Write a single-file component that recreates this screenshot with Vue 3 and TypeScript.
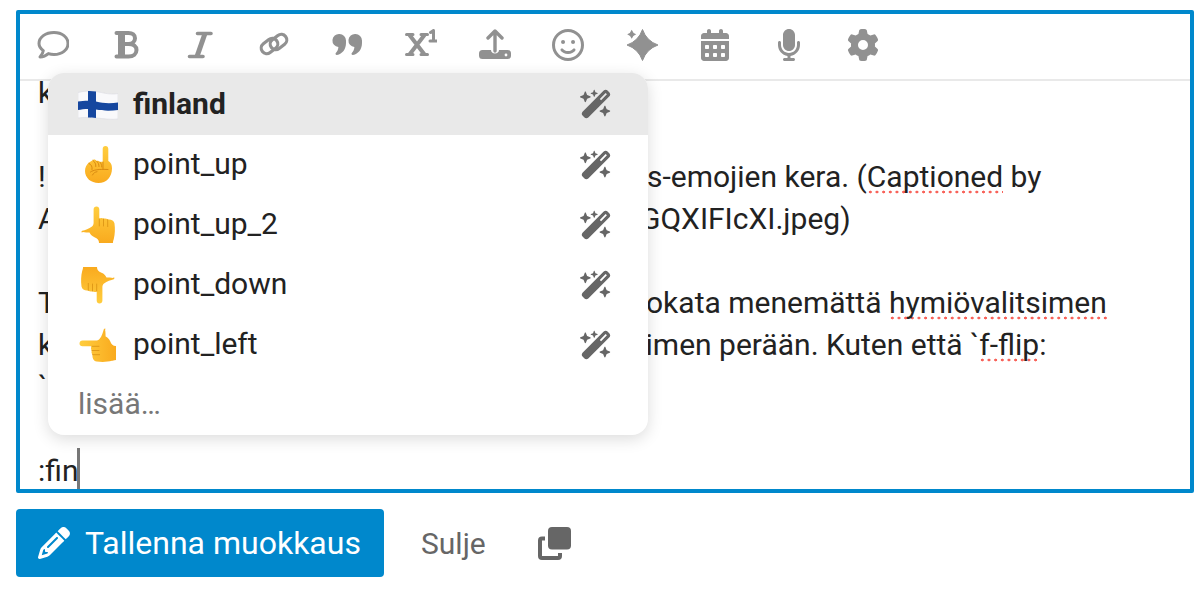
<script setup lang="ts">
interface Seg { t: string; spell?: boolean }
interface Line { lead: string; x?: number; segs?: Seg[] }

const lines: Line[] = [
  { lead: 'k' },
  { lead: '' },
  { lead: '!', x: 609, segs: [{ t: 's-emojien kera. (' }, { t: 'Captioned', spell: true }, { t: ' by' }] },
  { lead: 'A', x: 602, segs: [{ t: 'GQXIFIcXI.jpeg)' }] },
  { lead: '' },
  { lead: 'T', x: 608, segs: [{ t: 'okata menemättä ' }, { t: 'hymiövalitsimen', spell: true }] },
  { lead: 'k', x: 591, segs: [{ t: 'nimen perään. Kuten että `' }, { t: 'f-flip', spell: true }, { t: ':' }] },
  { lead: '`' },
  { lead: '' },
]

const icons = [
  { id: 'comment', vb: '0 0 32 32' },
  { id: 'bold', vb: '0 0 32 32' },
  { id: 'italic', vb: '0 0 32 32' },
  { id: 'link', vb: '0 0 32 32' },
  { id: 'quote', vb: '0 0 32 32' },
  { id: 'sup', vb: '0 0 32 32' },
  { id: 'upload', vb: '0 0 32 32' },
  { id: 'smile', vb: '0 0 512 512' },
  { id: 'spark', vb: '0 0 32 32' },
  { id: 'cal', vb: '0 0 448 512' },
  { id: 'mic', vb: '0 0 384 512' },
  { id: 'gear', vb: '0 0 512 512' },
]

const paths: Record<string, string> = {
  smile: 'M464 256A208 208 0 1 0 48 256a208 208 0 1 0 416 0zM0 256a256 256 0 1 1 512 0A256 256 0 1 1 0 256zm177.6 62.1C192.8 334.5 218.8 352 256 352s63.2-17.5 78.4-33.9c9-9.7 24.2-10.4 33.9-1.4s10.4 24.2 1.4 33.9c-22 23.8-60 49.4-113.6 49.4s-91.7-25.5-113.6-49.4c-9-9.7-8.4-24.9 1.4-33.9s24.9-8.4 33.9 1.4zM144.4 208a32 32 0 1 1 64 0 32 32 0 1 1 -64 0zm192-32a32 32 0 1 1 0 64 32 32 0 1 1 0-64z',
  cal: 'M128 0c17.7 0 32 14.3 32 32V64H288V32c0-17.7 14.3-32 32-32s32 14.3 32 32V64h48c26.5 0 48 21.5 48 48v48H0V112C0 85.5 21.5 64 48 64H96V32c0-17.7 14.3-32 32-32zM0 192H448V464c0 26.5-21.5 48-48 48H48c-26.5 0-48-21.5-48-48V192zm64 80v32c0 8.8 7.2 16 16 16h32c8.8 0 16-7.2 16-16V272c0-8.8-7.2-16-16-16H80c-8.8 0-16 7.2-16 16zm128 0v32c0 8.8 7.2 16 16 16h32c8.8 0 16-7.2 16-16V272c0-8.8-7.2-16-16-16H208c-8.8 0-16 7.2-16 16zm144-16c-8.8 0-16 7.2-16 16v32c0 8.8 7.2 16 16 16h32c8.8 0 16-7.2 16-16V272c0-8.8-7.2-16-16-16H336zM64 400v32c0 8.8 7.2 16 16 16h32c8.8 0 16-7.2 16-16V400c0-8.8-7.2-16-16-16H80c-8.8 0-16 7.2-16 16zm144-16c-8.8 0-16 7.2-16 16v32c0 8.8 7.2 16 16 16h32c8.8 0 16-7.2 16-16V400c0-8.8-7.2-16-16-16H208zm112 16v32c0 8.8 7.2 16 16 16h32c8.8 0 16-7.2 16-16V400c0-8.8-7.2-16-16-16H336c-8.8 0-16 7.2-16 16z',
  mic: 'M192 0C139 0 96 43 96 96V256c0 53 43 96 96 96s96-43 96-96V96c0-53-43-96-96-96zM64 216c0-13.3-10.7-24-24-24s-24 10.7-24 24v40c0 89.1 66.2 162.7 152 174.4V464H120c-13.3 0-24 10.7-24 24s10.7 24 24 24h72 72c13.3 0 24-10.7 24-24s-10.7-24-24-24H216V430.4c85.8-11.7 152-85.3 152-174.4V216c0-13.3-10.7-24-24-24s-24 10.7-24 24v40c0 70.7-57.3 128-128 128s-128-57.3-128-128V216z',
  gear: 'M495.9 166.6c3.2 8.7 .5 18.4-6.4 24.6l-43.3 39.4c1.1 8.3 1.7 16.8 1.7 25.4s-.6 17.1-1.7 25.4l43.3 39.4c6.9 6.2 9.6 15.9 6.4 24.6c-4.4 11.9-9.7 23.3-15.8 34.3l-4.7 8.1c-6.6 11-14 21.4-22.1 31.2c-5.9 7.2-15.7 9.6-24.5 6.8l-55.7-17.7c-13.4 10.3-28.2 18.9-44 25.4l-12.5 57.1c-2 9.1-9 16.3-18.2 17.8c-13.8 2.3-28 3.5-42.5 3.5s-28.7-1.2-42.5-3.5c-9.2-1.5-16.2-8.7-18.2-17.8l-12.5-57.1c-15.8-6.5-30.6-15.1-44-25.4L83.1 425.9c-8.8 2.8-18.6 .3-24.5-6.8c-8.1-9.8-15.5-20.2-22.1-31.2l-4.7-8.1c-6.1-11-11.4-22.4-15.8-34.3c-3.2-8.7-.5-18.4 6.4-24.6l43.3-39.4C64.6 273.1 64 264.6 64 256s.6-17.1 1.7-25.4L22.4 191.2c-6.9-6.2-9.6-15.9-6.4-24.6c4.4-11.9 9.7-23.3 15.8-34.3l4.7-8.1c6.6-11 14-21.4 22.1-31.2c5.9-7.2 15.7-9.6 24.5-6.8l55.7 17.7c13.4-10.3 28.2-18.9 44-25.4l12.5-57.1c2-9.1 9-16.3 18.2-17.8C227.3 1.2 241.5 0 256 0s28.7 1.2 42.5 3.5c9.2 1.5 16.2 8.7 18.2 17.8l12.5 57.1c15.8 6.5 30.6 15.1 44 25.4l55.7-17.7c8.8-2.8 18.6-.3 24.5 6.8c8.1 9.8 15.5 20.2 22.1 31.2l4.7 8.1c6.1 11 11.4 22.4 15.8 34.3zM256 336a80 80 0 1 0 0-160 80 80 0 1 0 0 160z',
  wand: 'M234.7 42.7L197 56.8c-3 1.1-5 4-5 7.2s2 6.1 5 7.2l37.7 14.1L248.8 123c1.1 3 4 5 7.2 5s6.1-2 7.2-5l14.1-37.7L315 71.2c3-1.1 5-4 5-7.2s-2-6.1-5-7.2L277.3 42.7 263.2 5c-1.1-3-4-5-7.2-5s-6.1 2-7.2 5L234.7 42.7zM46.1 395.4c-18.7 18.7-18.7 49.1 0 67.9l34.6 34.6c18.7 18.7 49.1 18.7 67.9 0L529.9 116.5c18.7-18.7 18.7-49.1 0-67.9L495.3 14.1c-18.7-18.7-49.1-18.7-67.9 0L46.1 395.4zM484.6 82.6l-105 105-23.3-23.3 105-105 23.3 23.3zM7.5 117.2C3 118.9 0 123.2 0 128s3 9.1 7.5 10.8L64 160l21.2 56.5c1.7 4.5 6 7.5 10.8 7.5s9.1-3 10.8-7.5L128 160l56.5-21.2c4.5-1.7 7.5-6 7.5-10.8s-3-9.1-7.5-10.8L128 96 106.8 39.5C105.1 35 100.8 32 96 32s-9.1 3-10.8 7.5L64 96 7.5 117.2zm352 256c-4.5 1.7-7.5 6-7.5 10.8s3 9.1 7.5 10.8L416 416l21.2 56.5c1.7 4.5 6 7.5 10.8 7.5s9.1-3 10.8-7.5L480 416l56.5-21.2c4.5-1.7 7.5-6 7.5-10.8s-3-9.1-7.5-10.8L480 352l-21.2-56.5c-1.7-4.5-6-7.5-10.8-7.5s-9.1 3-10.8 7.5L416 352l-56.5 21.2z',
  pencil: 'M410.3 231l11.3-11.3-33.9-33.9-62.1-62.1L291.7 89.8l-11.3 11.3-22.6 22.6L58.6 322.9c-10.4 10.4-18 23.3-22.2 37.4L1 480.7c-2.5 8.4-.2 17.5 6.1 23.7s15.3 8.5 23.7 6.1l120.3-35.4c14.1-4.2 27-11.8 37.4-22.2L387.7 253.7 410.3 231zM160 399.4l-9.1 22.7c-4 3.1-8.5 5.4-13.3 6.9L59.4 452l23-78.1c1.4-4.9 3.8-9.4 6.9-13.3l22.7-9.1v32c0 8.8 7.2 16 16 16h32zM362.7 18.7L348.3 33.2 325.7 55.8 314.3 67.1l33.9 33.9 62.1 62.1 33.9 33.9 11.3-11.3 22.6-22.6 14.5-14.5c25-25 25-65.5 0-90.5L453.3 18.7c-25-25-65.5-25-90.5 0zm-47.4 168l-144 144c-6.2 6.2-16.4 6.2-22.6 0s-6.2-16.4 0-22.6l144-144c6.2-6.2 16.4-6.2 22.6 0s6.2 16.4 0 22.6z',
}

const hand = 'M18.5 1.5c1.7 0 2.800 1.300 2.800 3V13.500c1.500-.8 3.200-.7 4.200.3 1.500-.6 3.300-.3 4.200.8 3-.6 6.300.9 6.800 4 .7 5 .5 11-.7 15.400-.3 1-.7 1.500-.9 4H21c.1-3-1.500-4.500-4.500-5.700-2.500-1-4-2.700-5-4.700-2-.1-4.500 0-6.500-.5C3.300 28 3 26.800 4.200 25.800 7 25 11 24 14 21.500c1.200-1 1.600-2.300 1.600-3.800V4.500c0-1.700 1.200-3 2.900-3z'

const rows = [
  { name: 'point_up', kind: 'fist' },
  { name: 'point_up_2', kind: 'up2' },
  { name: 'point_down', kind: 'down' },
  { name: 'point_left', kind: 'left' },
]
const handTransform: Record<string, string> = {
  up2: '',
  down: 'rotate(180 20 20)',
  left: 'matrix(0 1 1 0 0 0)',
}
</script>

<template>
  <div class="page">
    <svg class="defs" aria-hidden="true">
      <defs>
        <linearGradient id="skin" x1="0" y1="0" x2="0" y2="1">
          <stop offset="0" stop-color="#ffcd3e" />
          <stop offset="1" stop-color="#f9aa1e" />
        </linearGradient>
      </defs>
    </svg>
    <section class="editor">
      <div class="toolbar">
        <button v-for="ic in icons" :key="ic.id" class="tool">
          <svg class="tool-icon" :viewBox="ic.vb">
            <path v-if="paths[ic.id]" :d="paths[ic.id]" fill="currentColor" />
            <template v-else-if="ic.id === 'comment'">
              <path d="M17 3.500c8 0 14 4.700 14 11s-6 11-14 11c-2 0-3.900-.3-5.600-.9-1.900 1.700-4.500 3.300-8.400 3.400 1.700-1.900 3-4.100 3.300-6.400-2.700-2-4.300-4.600-4.300-7.100 0-6.300 6.500-11 15-11z" fill="none" stroke="currentColor" stroke-width="3" stroke-linejoin="round" />
            </template>
            <template v-else-if="ic.id === 'bold'">
              <path d="M10.500 4V28" fill="none" stroke="currentColor" stroke-width="7" />
              <path d="M5.500 4H17.500c4 0 6.500 2 6.500 5.300s-2.500 5.700-6.500 5.700H10M17.500 15c5 0 8 2.300 8 6s-3 6.500-8 6.500H5.500" fill="none" stroke="currentColor" stroke-width="4" stroke-linejoin="round" stroke-linecap="round" />
            </template>
            <template v-else-if="ic.id === 'italic'">
              <path d="M13.500 4.500H27M5.500 27.500H19" fill="none" stroke="currentColor" stroke-width="3.600" stroke-linecap="round" />
              <path d="M21 4.500L13 27.500" fill="none" stroke="currentColor" stroke-width="5" />
            </template>
            <template v-else-if="ic.id === 'link'">
              <g fill="none" stroke="currentColor" stroke-width="3.200">
                <rect x="2.500" y="11.500" width="18" height="11" rx="5.500" transform="rotate(-38 11.500 17)" />
                <rect x="11.500" y="7.500" width="18" height="11" rx="5.500" transform="rotate(-38 20.500 13)" />
              </g>
            </template>
            <template v-else-if="ic.id === 'quote'">
              <path d="M8.500 5a6.500 6.500 0 0 1 6.500 6.500v2.500c0 6-3.500 11-9 12c-1.200.2-2-1-1.200-2c1.500-1.500 2.300-3 2.600-6A6.500 6.500 0 0 1 8.500 5zM24.500 5a6.500 6.500 0 0 1 6.500 6.500v2.500c0 6-3.500 11-9 12c-1.200.2-2-1-1.200-2c1.500-1.500 2.300-3 2.600-6A6.500 6.500 0 0 1 24.500 5z" fill="currentColor" />
            </template>
            <template v-else-if="ic.id === 'sup'">
              <path d="M4.500 6L19.500 25.500M19.500 6L4.500 25.500" fill="none" stroke="currentColor" stroke-width="4" />
              <path d="M1.500 5.500H8M16 5.500H22.500M1.500 25.500H8M16 25.500H22.500" fill="none" stroke="currentColor" stroke-width="3" stroke-linecap="round" />
              <path d="M25.500 3.500L28.500 1.500V12M25 12H31.500" fill="none" stroke="currentColor" stroke-width="3" stroke-linecap="round" stroke-linejoin="round" />
            </template>
            <template v-else-if="ic.id === 'upload'">
              <path d="M9 9l7-7 7 7M16 3v19" fill="none" stroke="currentColor" stroke-width="3.400" stroke-linecap="round" stroke-linejoin="round" />
              <path d="M3.500 21H12c0 2.200 1.800 3.500 4 3.500s4-1.300 4-3.500h8.500a3.500 3.500 0 0 1 3.500 3.500v2a3.500 3.500 0 0 1-3.500 3.500h-25A3.500 3.500 0 0 1 0 26.500v-2A3.500 3.500 0 0 1 3.500 21z" fill="currentColor" />
              <circle cx="27" cy="26" r="1.400" fill="#fff" />
            </template>
            <template v-else-if="ic.id === 'spark'">
              <path d="M16.500 .5Q20.500 12 32 16 20.500 20 16.500 31.500 12.500 20 1 16 12.500 12 16.500 .5z" fill="currentColor" stroke="currentColor" stroke-linejoin="round" />
              <path d="M5.700 .8Q6.800 4.300 10.200 5.300 6.800 6.300 5.700 9.800 4.600 6.300 1.200 5.300 4.600 4.300 5.700 .8z" fill="currentColor" />
            </template>
          </svg>
        </button>
      </div>
      <div class="body">
        <div class="text">
          <div v-for="(l, i) in lines" :key="i" class="line">
            <span class="lead">{{ l.lead }}</span>
            <span v-if="l.segs" class="tail" :style="{ marginLeft: l.x + 'px' }">
              <template v-for="(s, j) in l.segs" :key="j"><span :class="{ spell: s.spell }">{{ s.t }}</span></template>
            </span>
          </div>
          <div class="line">:fin<span class="caret"></span></div>
        </div>
      </div>

      <div class="popup">
        <div class="row active">
          <svg class="emoji" viewBox="0 0 40 32">
            <path d="M0 4.500C6 3 12 2.500 18 3.500 26 5 33 7 40 5.500V31C33 32 26 30.500 18 30 12 29.500 6 29 0 30Z" fill="#f9f9fb" stroke="#dcdce2" stroke-width=".6" />
            <path d="M0 13.500C3 13 6.500 12.800 10 12.800V3C13 2.900 15.500 3.100 18 3.500V13.500C25 15.500 33 15.500 40 14.500V22C33 23 25 23 18 21.500V30C15 29.800 13 29.800 10 29.600V21C6.500 21 3 21.500 0 22Z" fill="#16479f" />
          </svg>
          <strong class="label finland">finland</strong>
          <svg class="wand" viewBox="0 0 576 512"><path :d="paths.wand" fill="currentColor" /></svg>
        </div>
        <div v-for="r in rows" :key="r.name" class="row">
          <svg class="emoji" viewBox="0 0 40 40">
            <template v-if="r.kind === 'fist'">
              <path d="M27.500 1c1.700 0 2.800 1.300 2.800 3V16c2 1 3.700 3 3.700 7.500 0 8.500-5.500 14.500-13.500 14.500C13 38 7 33 7 26c0-3.500 1.500-6.500 4-8.500l4-2.500c1.500-.9 2.800-.2 3.200 1 1.200-.7 2.800-.3 3.500 1 1-.5 2-.4 3 0V4c0-1.700 1-3 2.800-3z" fill="url(#skin)" />
              <path d="M15 15.500c2 1.500 3 3.500 2.800 6M18.500 16c1.800 1.500 2.500 3.500 2.500 5.500M21.800 17c1.400 1.300 2 3 2 5M25 17v7M11 18.500c2.500 1 3.500 3.500 3 6M12.500 27c3-2.200 8-3 17.500-2.500M14.500 30c1-2 2.500-3 4.500-3.300" fill="none" stroke="#d98a10" stroke-width="1" stroke-linecap="round" />
            </template>
            <g v-else :transform="handTransform[r.kind]">
              <path :d="hand" fill="url(#skin)" />
              <path d="M21.300 14v7M25.500 14v7M29.700 14.600v7" fill="none" stroke="#e09a18" stroke-width="1" stroke-linecap="round" />
            </g>
          </svg>
          <span class="label">{{ r.name }}</span>
          <svg class="wand" viewBox="0 0 576 512"><path :d="paths.wand" fill="currentColor" /></svg>
        </div>
        <div class="row more">lisää…</div>
      </div>
    </section>

    <footer class="actions">
      <button class="primary">
        <svg class="pencil" viewBox="0 0 512 512"><path :d="paths.pencil" fill="currentColor" /></svg>
        <span>Tallenna muokkaus</span>
      </button>
      <button class="close">Sulje</button>
      <button class="copy" aria-label="Kopioi">
        <svg viewBox="0 0 33 33" class="copy-icon">
          <rect x="10" y="0" width="23" height="22.500" rx="4" fill="currentColor" />
          <path d="M7 11.500H4A2 2 0 0 0 2 13.500V29a2 2 0 0 0 2 2H20a2 2 0 0 0 2-2V26" fill="none" stroke="currentColor" stroke-width="4" />
        </svg>
      </button>
    </footer>
  </div>
</template>

<style>
html, body { margin: 0; background: #fff; }
</style>

<style scoped>
.page {
  width: 1202px;
  height: 594px;
  box-sizing: border-box;
  padding: 10px 8px 0 16px;
  font-family: Roboto, "Liberation Sans", sans-serif;
  color: #222;
  overflow: hidden;
}
.defs { position: absolute; width: 0; height: 0; }
.editor {
  position: relative;
  box-sizing: border-box;
  width: 1178px;
  height: 483px;
  border: 4px solid #0088cc;
  border-radius: 2px;
  display: flex;
  flex-direction: column;
  overflow: hidden;
}
.toolbar {
  flex: none;
  height: 65px;
  border-bottom: 2px solid #e9e9e9;
  display: flex;
  gap: 7.6px;
}
.tool {
  width: 66px;
  flex: none;
  padding: 0 0 3px;
  border: 0;
  background: none;
  color: #919191;
  display: flex;
  align-items: center;
  justify-content: center;
}
.tool-icon { height: 32px; width: 32px; }
.body {
  flex: 1;
  min-height: 0;
  overflow: hidden;
  display: flex;
  flex-direction: column;
  justify-content: flex-end;
}
.text {
  padding-left: 18px;
  font-size: 30px;
  line-height: 42px;
  margin-bottom: -3px;
}
.line { height: 42px; white-space: nowrap; position: relative; }
.lead { display: inline-block; width: 0; }
.tail { display: inline-block; }
.spell {
  background-image: radial-gradient(circle, #f8635a 1.2px, transparent 1.7px);
  background-size: 6.67px 4px;
  background-repeat: repeat-x;
  background-position: 0 100%;
}
.caret {
  display: inline-block;
  width: 3px;
  height: 42px;
  margin-top: -2px;
  background: #777;
  vertical-align: top;
  margin-left: -1px;
}
.popup {
  position: absolute;
  left: 28px;
  top: 59px;
  width: 600px;
  background: #fff;
  border-radius: 16px;
  box-shadow: 0 4px 16px rgba(0, 0, 0, 0.14);
  overflow: hidden;
}
.row {
  height: 60px;
  display: flex;
  align-items: center;
  padding: 0 36px 0 30px;
  font-size: 30px;
  color: #222;
}
.row.active { background: #e9e9e9; height: 62px; }
.emoji { width: 40px; height: 40px; flex: none; }
.label { margin: 0 0 3px 15px; flex: 1; }
.label.finland { margin-bottom: 2px; }
strong.label { font-weight: 700; }
.wand { width: 32px; height: 32px; color: #666; flex: none; }
.more { color: #777; padding-bottom: 3px; box-sizing: border-box; }
.actions {
  display: flex;
  align-items: center;
  margin-top: 16px;
  height: 68px;
}
.primary {
  width: 368px;
  height: 68px;
  border: 0;
  border-radius: 4px;
  background: #0088cc;
  color: #fff;
  font: 32px Roboto, sans-serif;
  display: flex;
  align-items: center;
  padding: 0 0 0 22px;
  gap: 15px;
  box-sizing: border-box;
}
.pencil { width: 32px; height: 32px; flex: none; }
.close {
  border: 0;
  background: none;
  color: #666;
  font: 30px Roboto, sans-serif;
  margin-left: 37px;
  padding: 0;
}
.copy {
  border: 0;
  background: none;
  color: #666;
  padding: 0;
  margin-left: 52px;
  display: flex;
  width: 33px;
}
.copy-icon { width: 33px; height: 33px; }
</style>
